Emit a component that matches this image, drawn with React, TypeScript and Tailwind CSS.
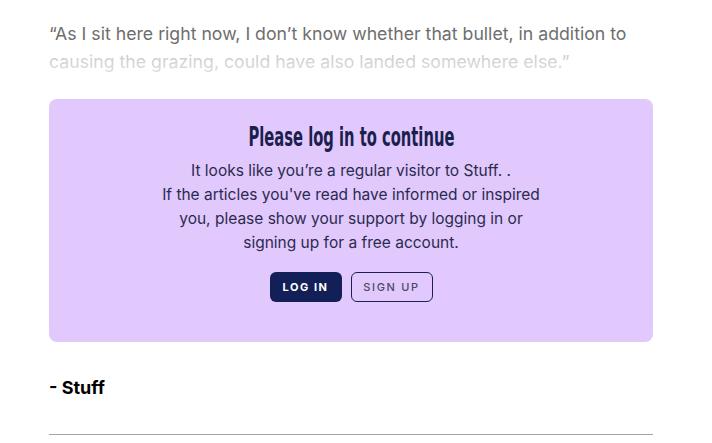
import React from 'react';

const sans = { fontFamily: 'Inter, "Open Sans", sans-serif' };

export default function App() {
  return (
    <div className="min-h-screen bg-white px-[49px] pt-[20px]" style={sans}>
      {/* Faded quote */}
      <div className="relative w-[604px]">
        <p className="text-[17.7px] leading-[28px] text-[#6e6e6e]">
          “As I sit here right now, I don’t know whether that bullet, in addition to
          causing the grazing, could have also landed somewhere else.”
        </p>
        <div className="absolute inset-x-0 top-[28px] h-[28px] bg-gradient-to-b from-white/60 to-white/80" />
      </div>

      {/* Login wall */}
      <div className="mt-[23px] w-[604px] h-[243px] rounded-lg bg-[#e1c8fd] flex flex-col items-center pt-[22px]">
        <h2
          className="text-[26px] leading-[32px] font-bold text-[#1b1f4e] whitespace-nowrap scale-x-[0.63]"
          style={{ fontFamily: '"DejaVu Sans", sans-serif', fontStretch: 'condensed' }}
        >
          Please log in to continue
        </h2>
        <p className="mt-[6px] text-center text-[15.5px] leading-[24px] text-[#2b2b4d] w-[400px]">
          It looks like you’re a regular visitor to Stuff. .
          <br />
          If the articles you've read have informed or inspired you, please show your support by logging in or
          signing up for a free account.
        </p>
        <div className="mt-[17px] flex gap-[9px]">
          <button className="w-[72px] h-[30px] rounded-md bg-[#131f57] text-white text-[11px] font-bold tracking-[0.14em]">
            LOG IN
          </button>
          <button className="w-[82px] h-[30px] rounded-md border border-[#1b1f4e] text-[#4a4a66] text-[11px] font-medium tracking-[0.15em]">
            SIGN UP
          </button>
        </div>
      </div>

      <p className="mt-[32px] text-[18px] font-bold text-black">- Stuff</p>

      <hr className="mt-[33px] w-[604px] border-t border-[#a6a6a6]" />
    </div>
  );
}
